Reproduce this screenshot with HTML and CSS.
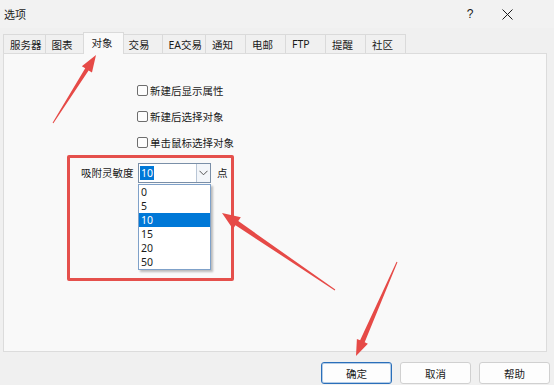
FILE: index.html
```html
<!DOCTYPE html>
<html lang="zh-CN">
<head>
<meta charset="utf-8">
<title>选项</title>
<link rel="stylesheet" href="styles.css">
</head>
<body>
<div class="window">
  <div class="titlebar">
    <span class="title">选项</span>
    <div class="title-actions">
      <span class="help">?</span>
      <span class="close">
        <svg width="11" height="11" viewBox="0 0 11 11"><path d="M0.5 0.5 L10.5 10.5 M10.5 0.5 L0.5 10.5" stroke="#1a1a1a" stroke-width="1" fill="none"/></svg>
      </span>
    </div>
  </div>
  <div class="tabs">
    <div class="tab">服务器</div>
    <div class="tab">图表</div>
    <div class="tab active">对象</div>
    <div class="tab">交易</div>
    <div class="tab">EA交易</div>
    <div class="tab">通知</div>
    <div class="tab">电邮</div>
    <div class="tab">FTP</div>
    <div class="tab">提醒</div>
    <div class="tab">社区</div>
  </div>
  <div class="panel">
    <div class="form">
      <label class="check"><span class="box"></span>新建后显示属性</label>
      <label class="check"><span class="box"></span>新建后选择对象</label>
      <label class="check"><span class="box"></span>单击鼠标选择对象</label>
      <span class="label">吸附灵敏度</span>
      <div class="control">
        <div class="combo">
          <div class="combo-value"><span class="sel">10</span></div>
          <div class="combo-btn">
            <svg width="9" height="6" viewBox="0 0 9 6"><path d="M0.5 0.8 L4.5 4.8 L8.5 0.8" stroke="#555" stroke-width="1" fill="none"/></svg>
          </div>
          <ul class="dropdown">
            <li>0</li>
            <li>5</li>
            <li class="current">10</li>
            <li>15</li>
            <li>20</li>
            <li>50</li>
          </ul>
        </div>
        <span class="unit">点</span>
      </div>
    </div>
  </div>
  <div class="footer">
    <button class="btn primary">确定</button>
    <button class="btn">取消</button>
    <button class="btn">帮助</button>
  </div>
  <div class="highlight"></div>
  <svg class="arrows" width="554" height="385" viewBox="0 0 554 385">
    <polygon fill="#e64a47" points="53.42,123.27 88.60,70.44 91.98,72.58 96,55 81.84,66.16 85.22,68.30 52.58,122.73"/>
    <polygon fill="#e64a47" points="335.28,289.59 238.29,221.07 240.82,217.35 222,213 232.94,228.93 235.47,225.21 334.72,290.41"/>
    <polygon fill="#e64a47" points="397.46,262.20 364.69,342.33 367.90,343.73 356,356 356.90,338.93 360.11,340.33 396.54,261.80"/>
  </svg>
</div>
</body>
</html>
```

FILE: styles.css
```css
* { box-sizing: border-box; }
html, body { margin: 0; padding: 0; }
body {
  background: #f0f0f0;
  font-family: "Noto Sans", "Noto Sans CJK SC", sans-serif;
  font-size: 10.5px;
  color: #1a1a1a;
}
.window {
  position: relative;
  width: 554px;
  height: 385px;
  background: #f0f0f0;
  display: flex;
  flex-direction: column;
  overflow: hidden;
}
.titlebar {
  height: 28px;
  display: flex;
  align-items: center;
  justify-content: space-between;
  padding: 0 32px 0 4px;
  background: #f2f2f2;
}
.title { font-size: 11px; }
.title-actions {
  display: flex;
  align-items: center;
  gap: 7px;
  height: 100%;
}
.help {
  width: 30px;
  text-align: center;
  font-size: 12px;
  font-family: "Liberation Sans", sans-serif;
}
.close {
  width: 30px;
  height: 100%;
  display: flex;
  align-items: center;
  justify-content: center;
}
.tabs {
  height: 25px;
  display: flex;
  align-items: flex-end;
  padding-left: 3px;
  position: relative;
  z-index: 2;
}
.tab {
  height: 19px;
  min-width: 41px;
  padding: 0 3px 0 6px;
  margin-left: -1px;
  border: 1px solid #dadada;
  border-bottom: none;
  background: #f0f0f0;
  display: flex;
  align-items: center;
  white-space: nowrap;
}
.tab:first-child { margin-left: 0; }
.tab.active {
  height: 22px;
  margin: 0 -2px -1px -3px;
  padding: 0 5px 2px 8px;
  background: #f9f9f9;
  position: relative;
  z-index: 3;
}
.tab.active + .tab { margin-left: 0; }
.panel {
  height: 299px;
  margin: 0 7px 0 3px;
  border: 1px solid #dcdcdc;
  background: #f9f9f9;
  padding: 23px 0 0 77px;
}
.form {
  display: grid;
  grid-template-columns: 57px auto;
  grid-auto-rows: 26px;
  align-items: center;
}
.check {
  grid-column: 2;
  display: flex;
  align-items: center;
  gap: 2px;
  margin-left: -1px;
}
.box {
  width: 11px;
  height: 11px;
  border: 1px solid #6e6e6e;
  border-radius: 2px;
  background: #fdfdfd;
}
.label { grid-column: 1; margin-top: 9px; }
.control {
  grid-column: 2;
  display: flex;
  align-items: center;
  gap: 6px;
  margin-top: 9px;
}
.combo {
  position: relative;
  width: 73px;
  height: 20px;
  border: 1px solid #7a8fa8;
  background: #fff;
  display: flex;
}
.combo-value {
  flex: 1;
  display: flex;
  align-items: center;
  padding-left: 1px;
}
.sel {
  background: #0078d7;
  color: #fff;
  padding: 0 1px;
  line-height: 14px;
}
.combo-btn {
  width: 14px;
  border-left: 1px solid #b9c6d6;
  background: #f3f6fa;
  display: flex;
  align-items: center;
  justify-content: center;
}
.dropdown {
  position: absolute;
  top: 20px;
  left: -1px;
  width: 73px;
  margin: 0;
  padding: 0;
  list-style: none;
  background: #fff;
  border: 1px solid #7fa1c9;
  box-shadow: 2px 2px 2px rgba(0,0,0,0.25);
  z-index: 5;
}
.dropdown li {
  height: 14px;
  line-height: 14px;
  padding-left: 2px;
}
.dropdown li.current {
  background: #0078d7;
  color: #fff;
}
.footer {
  flex: 1;
  display: flex;
  justify-content: flex-end;
  align-items: flex-start;
  gap: 8px;
  padding: 10px 4px 0 0;
}
.btn {
  width: 71px;
  height: 22px;
  font: inherit;
  font-size: 10.5px;
  color: #1a1a1a;
  background: #fdfdfd;
  border: 1px solid #d0d0d0;
  border-radius: 3px;
  padding: 0;
}
.btn.primary {
  border-color: #2a6fba;
  box-shadow: inset 0 0 0 1px rgba(42,111,186,0.35);
}
.highlight {
  position: absolute;
  left: 67px;
  top: 155px;
  width: 167px;
  height: 126px;
  border: 3px solid #e5504c;
  border-radius: 2px;
  z-index: 6;
  pointer-events: none;
}
.arrows {
  position: absolute;
  left: 0;
  top: 0;
  z-index: 7;
  pointer-events: none;
}
```
